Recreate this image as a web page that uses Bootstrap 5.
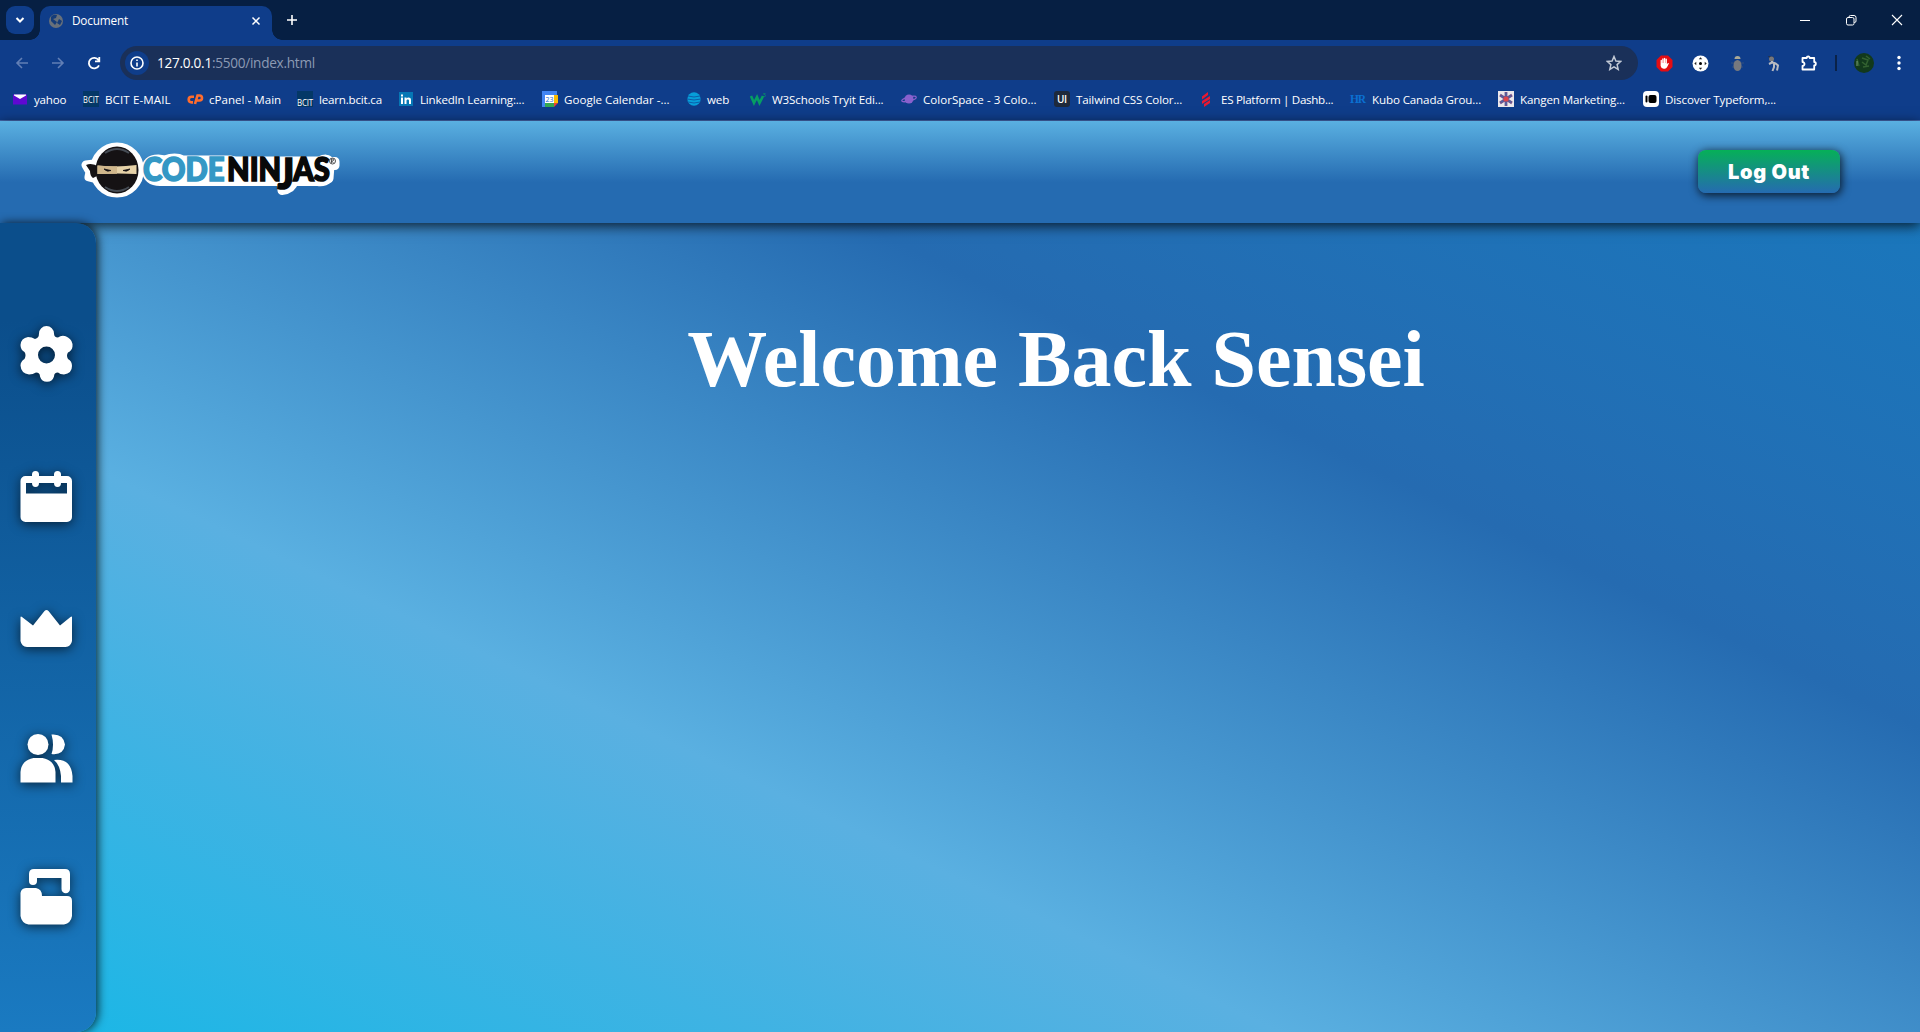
<!DOCTYPE html>
<html lang="en">
<head>
<meta charset="utf-8">
<title>Document</title>
<link rel="stylesheet" href="https://cdn.jsdelivr.net/npm/bootstrap@5.3.0/dist/css/bootstrap.min.css">
<style>
html,body{height:100%;overflow:hidden}
body{font-family:"Open Sans","Noto Sans",sans-serif;background:#0f3d8a}
svg{display:block;flex:none}
.browser{height:121px;font-size:12px;color:#fff;background:#0f3d8a;border-bottom:1px solid #4468ae}
.tabstrip{height:40px;background:#061f43;padding-left:6px}
.tabmenu{width:28px;height:28px;border-radius:9px;background:#0f3d8a;margin-top:6px}
.tab-active{width:232px;height:34px;margin:6px 0 0 6px;background:#0f3d8a;border-radius:10px 10px 0 0;padding:0 11px 4px 8px;font-size:11.8px;letter-spacing:-.2px;position:relative}
.tab-active::before,.tab-active::after{content:"";position:absolute;bottom:0;width:10px;height:10px}
.tab-active::before{left:-10px;background:radial-gradient(circle at 0 0,transparent 9.5px,#0f3d8a 10px)}
.tab-active::after{right:-10px;background:radial-gradient(circle at 100% 0,transparent 9.5px,#0f3d8a 10px)}
.newtab{margin:14px 0 0 14px}
.wincontrols{gap:34px;padding:14px 17px 0 0}
.toolbar{height:46px;padding:0 16px 0 15px}
.navicon{margin-left:22px}
.omnibox{width:1518px;height:34px;margin-left:19px;border-radius:17px;background:#1a3059;padding:0 16px 0 5px;font-size:13.6px;letter-spacing:-.27px;color:#8c9ab4}
.siteinfo{width:24px;height:24px;border-radius:50%;background:#0f3d8a}
.urltext{margin-left:8px}
.extensions{margin-left:18px;gap:19.3px}
.divider{width:2px;height:16px;background:#0a2248;margin:0 -3px 0 -2px}
.bookmarks{height:34px;padding:0 0 7px 12px}
.bm{gap:6px;white-space:nowrap;font-size:11.6px;letter-spacing:-.2px;flex:none}
.bm svg{overflow:visible}
.bm:nth-child(1){width:71px}.bm:nth-child(2){width:104px}.bm:nth-child(3){width:110px}.bm:nth-child(4){width:102px}.bm:nth-child(5){width:143px}.bm:nth-child(6){width:145px}.bm:nth-child(7){width:64px}.bm:nth-child(8){width:150px}.bm:nth-child(9){width:153px}.bm:nth-child(10){width:145px}.bm:nth-child(11){width:151px}.bm:nth-child(12){width:148px}.bm:nth-child(13){width:145px}
.bm:nth-child(n+6){letter-spacing:-.13px}
.bm:nth-child(2){letter-spacing:.1px}
.bm:nth-child(3),.bm:nth-child(6),.bm:nth-child(9){letter-spacing:0}
.bm:nth-child(11){letter-spacing:-.3px}
.site{height:911px;background:linear-gradient(to top right,#18b7e6,#5ab0e1 33.33%,#256bb1 66.67%,#1879be)}
.siteheader{height:102px;background:linear-gradient(#5ab0e1,#256bb1 60%);box-shadow:0 3px 12px rgba(0,0,0,.75);padding:0 80px;position:relative}
.brand{margin-top:-5px}
.logout{width:142px;height:43px;border:0;border-radius:8px;background:linear-gradient(#06b058,#256bb1);box-shadow:1px 2px 8px 1px rgba(0,0,0,.7);font:900 20px Inter,sans-serif;letter-spacing:.7px;color:#fff;padding:1px 0 0;margin-bottom:2px}
.sidenav{width:96px;height:809px;flex:none;background:linear-gradient(#0b4e8b 12%,#1a7ac1);border-radius:0 20px 20px 0;box-shadow:2px 0 10px rgba(0,0,0,.75);padding:103px 0 0 20px;gap:87px;position:relative}
.sidenav svg{fill:#fff;filter:drop-shadow(0 2px 6px rgba(0,0,0,.65));overflow:visible}
.sidenav svg:nth-child(3){margin-top:1px}
.sidenav svg:nth-child(5){margin-top:-1px}
.welcome{font:bold 80px/92px "Liberation Serif",serif;color:#fff;width:1920px;padding-top:90px;margin:0}
</style>
<script src="https://cdn.jsdelivr.net/npm/bootstrap@5.3.0/dist/js/bootstrap.bundle.min.js"></script>
</head>
<body>
<div class="browser">
 <div class="tabstrip d-flex">
  <div class="tabmenu d-flex align-items-center justify-content-center"><svg width="10" height="8" fill="none" stroke="#fff" stroke-width="2"><path d="M1.5 2 5 5.5 8.500 2"/></svg></div>
  <div class="tab-active d-flex align-items-center">
   <svg width="16" height="16" viewBox="0 0 16 16"><circle cx="8" cy="8" r="7" fill="#68707a"/><path d="M3 4c2-3 5-2 6-2L8 5 5 6l4 3-2 3-4-4zM11 6l3 2-2 4-3-2z" fill="#153c79"/></svg>
   <span class="ms-2">Document</span>
   <svg class="ms-auto" width="10" height="10" stroke="#fff" stroke-width="1.500"><path d="M1.500 1.500l7 7M8.500 1.500l-7 7"/></svg>
  </div>
  <svg class="newtab" width="12" height="12" stroke="#fff" stroke-width="1.600"><path d="M6 1v10M1 6h10"/></svg>
  <div class="wincontrols d-flex ms-auto">
   <svg width="12" height="12" stroke="#fff"><path d="M1 6.500h10"/></svg>
   <svg width="12" height="12" fill="none" stroke="#fff"><rect x="1.500" y="3.500" width="7.500" height="7.500" rx="1.500"/><path d="M4 3.500V3a1.500 1.500 0 0 1 1.500-1.500H9A2 2 0 0 1 11 3.500V7a1.500 1.500 0 0 1-1.500 1.500H9"/></svg>
   <svg width="12" height="12" stroke="#fff" stroke-width="1.100"><path d="M1 1l10 10M11 1 1 11"/></svg>
  </div>
 </div>
 <div class="toolbar d-flex align-items-center">
  <svg width="14" height="14" fill="none" stroke="#627fb5" stroke-width="1.600"><path d="M13 7H2M7 2 2 7l5 5"/></svg>
  <svg class="navicon" width="14" height="14" fill="none" stroke="#627fb5" stroke-width="1.600"><path d="M1 7h11M7 2l5 5-5 5"/></svg>
  <svg class="navicon" width="14" height="14" fill="none" stroke="#fff" stroke-width="1.800"><path d="M12 9.300A5.300 5.300 0 1 1 11.500 4L12.500 5M12.300 1v4.300H8"/></svg>
  <div class="omnibox d-flex align-items-center">
   <span class="siteinfo d-flex align-items-center justify-content-center"><svg width="14" height="14" fill="none" stroke="#fff" stroke-width="1.600"><circle cx="7" cy="7" r="6"/><path d="M7 6.500v4M7 3.500v1.500"/></svg></span>
   <span class="urltext"><span class="text-white">127.0.0.1</span>:5500/index.html</span>
   <svg class="ms-auto" width="16" height="16" fill="none" stroke="#c2c9d5" stroke-width="1.500"><path d="M8 1.500l1.900 4.500 4.900.400-3.700 3.200 1.100 4.800L8 11.900l-4.200 2.500L4.900 9.600 1.200 6.400 6.100 6z"/></svg>
  </div>
  <div class="extensions d-flex align-items-center">
   <svg width="17" height="17" viewBox="0 0 17 17"><path d="M5 .5h7L16.500 5v7L12 16.500H5L.5 12V5z" fill="#e40d12"/><path d="M4.600 8.300V5.200q.7-.8 1.300 0V8h.3V3.700q.7-.8 1.400 0V8h.3V3.200q.7-.8 1.400 0V8h.3V4q.7-.8 1.300 0v5.200l1-1.200q.9-.3 1 .5l-1.900 3.800q-.8 1.400-2.200 1.400H7.700Q5.200 13.600 4.600 11z" fill="#fff"/></svg>
   <svg width="17" height="17" viewBox="0 0 17 17"><circle cx="8.500" cy="8.500" r="8" fill="#fff"/><circle cx="8.500" cy="8.500" r="1.500"/><path d="M8.500 2.300l1.700 2H6.800zM8.500 14.700l1.700-2H6.800zM2.300 8.500l2-1.700v3.400zM14.700 8.500l-2-1.700v3.400z" fill="#222"/></svg>
   <svg width="17" height="17" viewBox="0 0 17 17"><path d="M2 8h13M3 12h11" stroke="#34507e"/><ellipse cx="8.500" cy="10.500" rx="4" ry="5.500" fill="#77797e"/><path d="M5.500 4a3 3 0 0 1 6 0z" fill="#aaa895"/></svg>
   <svg width="17" height="17" viewBox="0 0 17 17"><path d="M3 1l6 1-2 5z" fill="#2b303d"/><circle cx="6.500" cy="4" r="2.500" fill="#77777a"/><path d="M6 7l4.500 1.500 2.500 2-1 5M9 8.500v3.500l-1.500 4M4 9l4-2" fill="none" stroke="#b9bbc1" stroke-width="2"/></svg>
   <svg width="17" height="17" fill="none" stroke="#fff" stroke-width="1.800"><path d="M1.500 3h4.200a1.500 1.500 0 0 1 3 0h4.500v4a1.600 1.600 0 0 1 0 3.300v4.200H1.500v-3.500a2 2 0 0 0 0-4z" stroke-linejoin="round"/></svg>
   <span class="divider"></span>
   <svg width="20" height="20"><circle cx="10" cy="10" r="10" fill="#12391c"/><path d="M3 6l2 7M8 5l6 2-2 5-4-3M9 14l6-1M12 3l4 3" stroke="#326130" stroke-width="1.500" fill="none"/><path d="M3 8v5" stroke="#7ba07b"/></svg>
   <svg class="ms-1" width="4" height="16" fill="#fff"><circle cx="2" cy="2.500" r="1.700"/><circle cx="2" cy="8" r="1.700"/><circle cx="2" cy="13.500" r="1.700"/></svg>
  </div>
 </div>
 <div class="bookmarks d-flex align-items-center">
  <div class="bm d-flex align-items-center"><svg width="16" height="16"><path d="M1 3.500h14v10H1z" fill="#6008d2"/><path d="M2 3.500h12v1L8 8 2 4.500z" fill="#fff"/></svg>yahoo</div>
  <div class="bm d-flex align-items-center"><svg width="16" height="16"><path d="M0 0h16v16H0z" fill="#043867"/><text x="0" y="12" font-size="9" textLength="16" lengthAdjust="spacingAndGlyphs" fill="#fff">BCIT</text></svg>BCIT E-MAIL</div>
  <div class="bm d-flex align-items-center"><svg width="16" height="16" fill="none" stroke="#ff6c2c" stroke-width="2.600"><path d="M7 5.800H4.500a2.800 2.800 0 0 0 0 5.600H6M8 13l2.500-8.500h2a2.300 2.300 0 0 1 0 5H10"/></svg>cPanel - Main</div>
  <div class="bm d-flex align-items-center"><svg width="16" height="16"><path d="M0 0h16v16H0z" fill="#043867"/><text x="0" y="15" font-size="9" textLength="16" lengthAdjust="spacingAndGlyphs" fill="#fff">BCIT</text></svg>learn.bcit.ca</div>
  <div class="bm d-flex align-items-center"><svg width="15" height="16"><path d="M0 1h14v14H0z" fill="#0677b5"/><path d="M2 6.500h2V13H2zM2 3.500h2v2H2zM5.500 6.500h2v1c1-1.500 4.500-1.500 4.500 1.500v4h-2V9.500c0-1.500-2.500-1.500-2.500 0V13h-2z" fill="#fff"/></svg>LinkedIn Learning:...</div>
  <div class="bm d-flex align-items-center"><svg width="16" height="16"><path d="M0 0h15v4H3v12H0z" fill="#4285f4"/><path d="M12 4h4v8h-4z" fill="#fbbc04"/><path d="M3 12h9v4H3z" fill="#34a853"/><path d="M12 12h4l-4 4z" fill="#ea4335"/><path d="M3 4h9v8H3z" fill="#fff"/><text x="3.500" y="10.700" font-size="7" textLength="8" lengthAdjust="spacingAndGlyphs" fill="#2369d2">23</text></svg>Google Calendar -...</div>
  <div class="bm d-flex align-items-center"><svg width="14" height="16"><circle cx="7" cy="8" r="6.700" fill="#079ed9"/><path d="M1 5q6 2 12 0M0 8q7 2 14 0M1 11q6 2 12 0" fill="none" stroke="#0b5eaa"/></svg>web</div>
  <div class="bm d-flex align-items-center"><svg width="15" height="16"><path d="M0 5l3 7L6 6l2.500 6L12 5" fill="none" stroke="#069e63" stroke-width="2.600"/><text x="11.500" y="6" font-size="6" fill="#069e63">3</text></svg>W3Schools Tryit Edi...</div>
  <div class="bm d-flex align-items-center"><svg width="16" height="16"><circle cx="8" cy="8" r="4.500" fill="#8961cd"/><ellipse cx="8" cy="8" rx="7.500" ry="2" fill="none" stroke="#8961cd" stroke-width="1.300" transform="rotate(-15 8 8)"/></svg>ColorSpace - 3 Colo...</div>
  <div class="bm d-flex align-items-center"><svg width="16" height="16"><rect width="16" height="16" rx="3" fill="#1e293b"/><text x="3" y="12" font-size="10" font-weight="600" textLength="10" fill="#fff">UI</text></svg>Tailwind CSS Color...</div>
  <div class="bm d-flex align-items-center"><svg width="16" height="16" fill="#e91930"><path d="M3 5.500L9 1v3L3 8.500zM3 10l8-5v3l-8 5zM5 13l6-4v3l-6 4z"/></svg>ES Platform | Dashb...</div>
  <div class="bm d-flex align-items-center"><svg width="16" height="16"><text x="0" y="12" font-family="Liberation Serif" font-weight="bold" font-size="11.500" textLength="16" fill="#0b70d2">HR</text></svg>Kubo Canada Grou...</div>
  <div class="bm d-flex align-items-center"><svg width="16" height="16"><path d="M0 0h16v16H0z" fill="#ece8eb"/><path d="M8 1v14M2 4l12 8M14 4 2 12" stroke="#71518b" stroke-width="2.800"/><path d="M8 2v3M3 5l2 1M13 5l-2 1M8 11v3M3 11l2-1M13 11l-2-1" stroke="#3b6cb0"/><circle cx="8" cy="8" r="2.500" fill="#df474c"/></svg>Kangen Marketing...</div>
  <div class="bm d-flex align-items-center"><svg width="16" height="16"><rect width="16" height="16" rx="4" fill="#fff"/><rect x="2.500" y="4.500" width="2" height="7" rx="1"/><rect x="5.500" y="4" width="8" height="8" rx="2"/></svg>Discover Typeform,...</div>
 </div>
</div>
<div class="site d-flex flex-column">
 <header class="siteheader d-flex align-items-center justify-content-between">
  <svg class="brand" width="262" height="60" viewBox="0 0 262 60">
   <g stroke="#fff" stroke-width="9" stroke-linejoin="round" fill="#fff"><ellipse cx="37" cy="30" rx="22.500" ry="23"/><path d="M6 25l8-1 5 4v5l-6 5-4-1 1-5z"/>
   <path d="M66 30q0-11 12-11l7 1q10-4 18 0h47l5 1h84q9-4 10 .500h6v4h-5l-1 13q-5 4-11 3h-24q-2 8-12 9v-9h-45l-2-1v1H80q-12 0-14-11z"/></g>
   <path d="M6 25q6-3 13 2v8q-4 2-6 3-3-2-3-7z" fill="#151214"/>
   <ellipse cx="37" cy="30" rx="21.500" ry="23.500" fill="#151214"/>
   <path d="M25 13q12-8 24 0M25 47q12 8 24 0" fill="none" stroke="#454b54" stroke-width="2"/>
   <path d="M17.500 25.500q20 2 39-.500v9q-18-1-39 0z" fill="#e6d2a8"/><path d="M17.500 25.500q10 1 19.500.700v7.500l-19.500.3z" fill="#d0b78c"/>
   <path d="M24 29l7 1.500q-4 2-7-1.500M50 29l-7 1.500q4 2 7-1.500" fill="#151214" stroke="#151214" stroke-width=".8"/>
   <g font-family="Lato" font-weight="900" font-size="31.500">
    <text x="63" y="41" textLength="81.500" lengthAdjust="spacingAndGlyphs" fill="#3498c5" stroke="#3498c5" stroke-width="1.600">CODE</text>
    <text x="147" y="41" textLength="103" lengthAdjust="spacingAndGlyphs" fill="#080909" stroke="#080909" stroke-width="1.600">NIN<tspan dx="-4" dy="8" font-size="42">J</tspan><tspan dx="-1" dy="-8">AS</tspan></text>
   </g>
   <circle cx="252.500" cy="21" r="3" fill="none" stroke="#222" stroke-width=".8"/><path d="M251.500 23v-4h1.500q1.500 1 0 2h-1.500l2 2" fill="none" stroke="#222" stroke-width=".7"/>
  </svg>
  <button class="logout">Log Out</button>
 </header>
 <div class="d-flex">
  <nav class="sidenav d-flex flex-column">
   <svg width="53" height="58" viewBox="0 0 53 58"><path fill-rule="evenodd" d="M19 7.500a7.500 7.500 0 0 1 15 0q0 4 4 4a7.700 7.700 0 0 1 10 0q5 3 4.500 9-.5 4-4.500 6-2 3 0 6.500 4 2 4 7 0 7.500-8 8.500-4 0-6-2-4 0-4 4a7.300 7.300 0 0 1-14 0q0-4-4-4-3 2-7 2-8-1-8.500-9 0-4 4-6.500 2-4 0-7Q.5 24 .5 19q.5-7 7.500-8 4 0 7 2 4-1 4-5.500zM26.500 20.500a8.500 8.500 0 1 0 0 17 8.500 8.500 0 0 0 0-17z"/></svg>
   <svg width="53" height="51" viewBox="0 0 53 51"><path fill-rule="evenodd" d="M5.500 5H12V3.500a3.500 3.500 0 0 1 7 0V5h15V3.500a3.500 3.500 0 0 1 7 0V5h6a5 5 0 0 1 5 5v36a5 5 0 0 1-5 5H5.500a5 5 0 0 1-5-5V10a5 5 0 0 1 5-5zM6 12v10.500h41V12h-6a3.500 4 0 0 1-7 0H19a3.500 4 0 0 1-7 0z"/></svg>
   <svg width="53" height="37" viewBox="0 0 53 37"><path d="M.5 7.500q0-1.500 1.500-.500l11 8.500L24.500 1q2-2 4 0L40 15.500 50.500 7q1.500-1 1.500.500V31q-1 5.500-6.500 6H7Q1.500 36.500.5 31z"/></svg>
   <svg width="53" height="49" viewBox="0 0 53 49"><circle cx="18" cy="10.500" r="10.500"/><path d="M.5 48.500V38q1-12 13-14h9q12 2 13 14v10.500zM31.500.5q12-1 13.500 10-1.500 11-13.500 9.500 3-9 0-19.500zM34 26q17-2 18.500 16v6.500H41V42q-1-11-7-16z"/></svg>
   <svg width="53" height="56" viewBox="0 0 53 56"><path d="M9 5q0-5 5-5h31q5 0 5 5v15a4.200 4.200 0 0 1-8.500 0V9H17v3a4 4 0 0 1-8 0zM6 19h10q6 1 6 8h25q5 0 5 5v15q-1 7-8 8.500H8.500Q1.500 54 .5 47V24q.5-4.500 5.500-5z"/></svg>
  </nav>
  <main><h1 class="welcome text-center">Welcome Back Sensei</h1></main>
 </div>
</div>
</body>
</html>
